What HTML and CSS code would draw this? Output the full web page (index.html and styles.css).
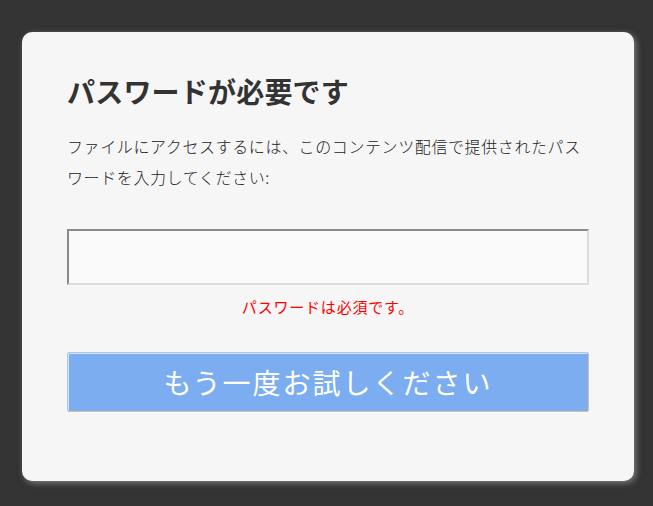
FILE: index.html
```html
<!DOCTYPE html>
<html lang="ja">
<head>
<meta charset="utf-8">
<title>パスワードが必要です</title>
<link rel="stylesheet" href="styles.css">
</head>
<body>
<div class="card">
  <h1 class="title">パスワードが必要です</h1>
  <p class="desc">ファイルにアクセスするには、このコンテンツ配信で提供されたパスワードを入力してください:</p>
  <input class="pw" type="password" aria-label="パスワード">
  <div class="error">パスワードは必須です。</div>
  <button class="retry" type="button">もう一度お試しください</button>
</div>
</body>
</html>
```

FILE: styles.css
```css
html, body {
  margin: 0;
  padding: 0;
}
body {
  background: #333333;
  height: 506px;
  overflow: hidden;
  font-family: "Noto Sans CJK JP", "Noto Sans", sans-serif;
}
.card {
  box-sizing: border-box;
  width: 612px;
  height: 449px;
  margin: 32px 0 0 22px;
  padding: 42px 45px 0 45px;
  background: #f6f6f6;
  border-radius: 10px;
  box-shadow: 2px 2px 6px rgba(190, 190, 190, 0.55);
  display: flex;
  flex-direction: column;
}
.title {
  margin: 0;
  font-size: 28px;
  line-height: 34px;
  font-weight: 700;
  letter-spacing: 0.2px;
  color: #333333;
}
.desc {
  margin: 23px 0 0 0;
  font-size: 16px;
  letter-spacing: 0.6px;
  line-height: 31px;
  color: #222222;
  font-weight: 300;
}
.pw {
  box-sizing: border-box;
  margin: 36px 0 0 0;
  width: 522px;
  height: 56px;
  border-style: solid;
  border-width: 2px;
  border-color: #8a8a8a #dcdcdc #dcdcdc #8a8a8a;
  background: #fafafa;
  padding: 0 8px;
  font-size: 18px;
  outline: none;
}
.error {
  margin-top: 12px;
  text-align: center;
  color: #ff0000;
  font-size: 15px;
  letter-spacing: 0.8px;
  line-height: 20px;
  font-weight: 400;
}
.retry {
  box-sizing: border-box;
  margin-top: 35px;
  width: 522px;
  height: 60px;
  background: #7badf0;
  border: 1px solid #a6c6f4;
  box-shadow: inset 1px 1px 0 #d8e4f4, inset -1px -1px 0 #a8a8a8;
  border-radius: 2px;
  color: #ffffff;
  font-family: "Noto Sans CJK JP", "Noto Sans", sans-serif;
  font-size: 28px;
  letter-spacing: 2px;
  font-weight: 400;
  line-height: 1;
  padding: 0;
  cursor: pointer;
}
```
